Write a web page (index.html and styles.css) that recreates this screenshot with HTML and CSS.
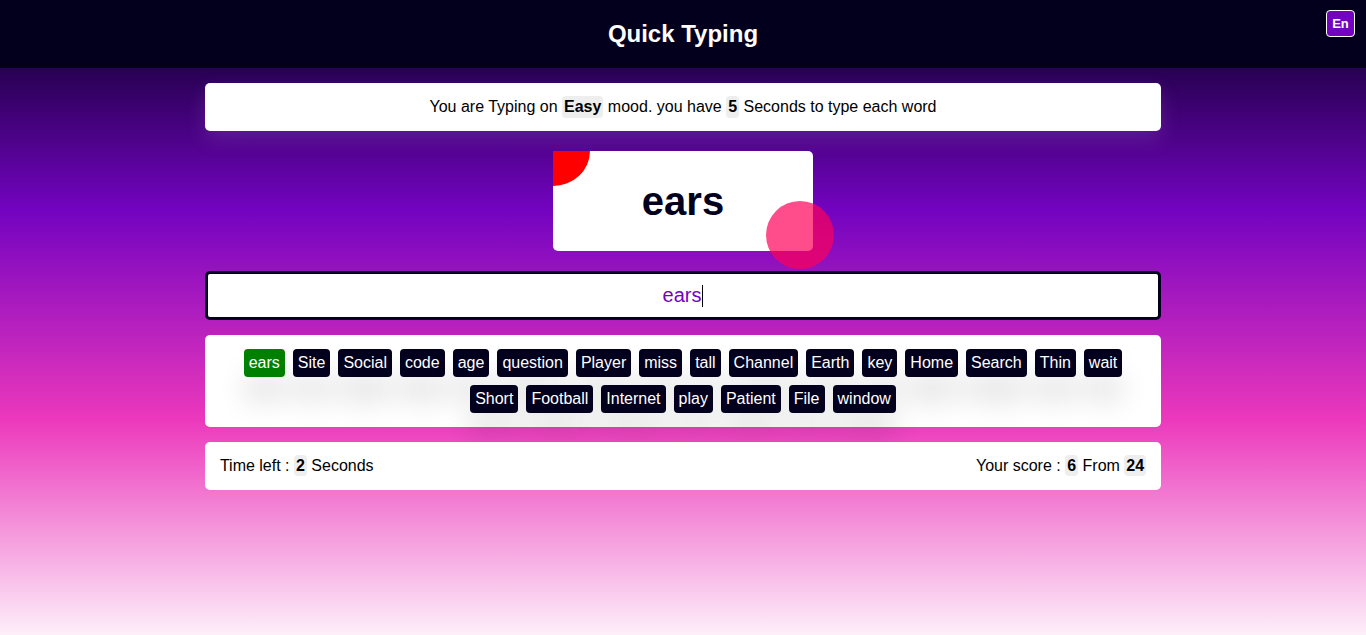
FILE: index.html
```html
<!DOCTYPE html>
<html lang="en">
<head>
<meta charset="utf-8">
<title>Quick Typing</title>
<link rel="stylesheet" href="styles.css">
</head>
<body>
<header class="header">
  <h1 class="title">Quick Typing</h1>
  <button class="lang">En</button>
</header>
<main class="container">
  <div class="message">You are Typing on <span class="tag">Easy</span> mood. you have <span class="tag">5</span> Seconds to type each word</div>
  <div class="card-wrap">
    <div class="word-card">
      <span class="corner"></span>
      <span class="word">ears</span>
      <span class="bubble"></span>
    </div>
  </div>
  <div class="input-box"><span class="typed">ears</span><span class="caret"></span></div>
  <div class="upcoming">
    <div class="chip done">ears</div>
    <div class="chip">Site</div>
    <div class="chip">Social</div>
    <div class="chip">code</div>
    <div class="chip">age</div>
    <div class="chip">question</div>
    <div class="chip">Player</div>
    <div class="chip">miss</div>
    <div class="chip">tall</div>
    <div class="chip">Channel</div>
    <div class="chip">Earth</div>
    <div class="chip">key</div>
    <div class="chip">Home</div>
    <div class="chip">Search</div>
    <div class="chip">Thin</div>
    <div class="chip">wait</div>
    <div class="chip">Short</div>
    <div class="chip">Football</div>
    <div class="chip">Internet</div>
    <div class="chip">play</div>
    <div class="chip">Patient</div>
    <div class="chip">File</div>
    <div class="chip">window</div>
  </div>
  <div class="control">
    <div class="time">Time left : <span class="tag">2</span> Seconds</div>
    <div class="score">Your score : <span class="tag">6</span> From <span class="tag">24</span></div>
  </div>
</main>
</body>
</html>
```
FILE: styles.css
```css
* { box-sizing: border-box; }
html, body { margin: 0; padding: 0; }
body {
  min-height: 100vh;
  font-family: "Liberation Sans", Arial, sans-serif;
  background: linear-gradient(to bottom, #03001e 0%, #7303c0 33%, #ec38bc 66%, #fdeff9 100%);
  color: #000;
}
.header {
  position: relative;
  height: 68px;
  background: #03001e;
  display: flex;
  align-items: center;
  justify-content: center;
}
.title {
  margin: 0;
  color: #fff;
  font-size: 24px;
  font-weight: bold;
}
.lang {
  position: absolute;
  top: 10px;
  right: 11px;
  width: 29px;
  height: 27px;
  padding: 0;
  border: 1px solid #fff;
  border-radius: 4px;
  background: #7303c0;
  color: #fff;
  font-family: "Liberation Sans", Arial, sans-serif;
  font-weight: bold;
  font-size: 13px;
}
.container {
  width: 70%;
  margin: 15px auto 0;
  display: flex;
  flex-direction: column;
}
.message {
  height: 48px;
  background: #fff;
  border-radius: 5px;
  display: flex;
  align-items: center;
  justify-content: center;
  font-size: 16px;
  box-shadow: 0 8px 20px rgba(200,150,230,0.18);
  white-space: pre;
}
.tag {
  background: #eee;
  font-weight: bold;
  padding: 2px 2px;
  border-radius: 4px;
}
.card-wrap {
  display: flex;
  justify-content: center;
  margin-top: 20px;
}
.word-card {
  position: relative;
  width: 260px;
  height: 100px;
  background: #fff;
  border-radius: 5px;
  display: flex;
  align-items: center;
  justify-content: center;
}
.corner {
  position: absolute;
  left: 0;
  top: 0;
  width: 37px;
  height: 35px;
  background: #ff0000;
  border-bottom-right-radius: 100%;
}
.word {
  position: relative;
  font-size: 40px;
  font-weight: bold;
  color: #03001e;
}
.bubble {
  position: absolute;
  left: 213px;
  top: 50px;
  width: 68px;
  height: 68px;
  border-radius: 50%;
  background: rgba(255, 0, 89, 0.7);
}
.input-box {
  margin-top: 20px;
  height: 49px;
  background: #fff;
  border: 3px solid #03001e;
  border-radius: 5px;
  display: flex;
  align-items: center;
  justify-content: center;
  font-size: 20px;
  color: #7303c0;
}
.caret {
  display: inline-block;
  width: 1px;
  height: 22px;
  background: #000;
  margin-left: 1px;
}
.upcoming {
  margin-top: 15px;
  background: #fff;
  border-radius: 5px;
  padding: 14px 15px;
  display: flex;
  flex-wrap: wrap;
  justify-content: center;
  gap: 8px;
}
.chip {
  background: #03001e;
  color: #fff;
  font-size: 16px;
  line-height: 18px;
  padding: 5px;
  border-radius: 4px;
  box-shadow: 0 25px 28px rgba(0,0,0,0.1);
}
.chip.done { background: #008000; }
.control {
  margin-top: 15px;
  height: 48px;
  background: #fff;
  border-radius: 5px;
  padding: 0 15px;
  display: flex;
  align-items: center;
  justify-content: space-between;
  font-size: 16px;
}
```
